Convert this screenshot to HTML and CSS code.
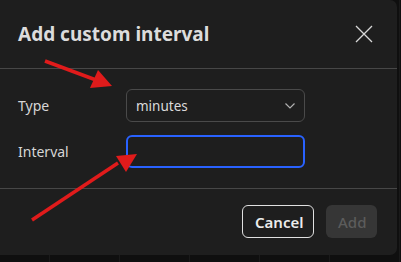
FILE: index.html
```html
<!DOCTYPE html>
<html>
<head>
<meta charset="utf-8">
<link rel="stylesheet" href="styles.css">
</head>
<body>
<div class="dialog">
  <div class="header">
    <div class="title">Add custom interval</div>
    <button class="close" aria-label="Close">
      <svg width="18" height="18" viewBox="0 0 18 18"><path d="M1 1L17 17M17 1L1 17" stroke="#d8d8d8" stroke-width="1.3" fill="none"/></svg>
    </button>
  </div>
  <div class="body">
    <label class="label">Type</label>
    <div class="select">
      <span>minutes</span>
      <svg width="12" height="8" viewBox="0 0 12 8"><path d="M1.5 1.5L6 6L10.5 1.5" stroke="#b0b0b0" stroke-width="1.2" fill="none"/></svg>
    </div>
    <label class="label">Interval</label>
    <div class="input"></div>
  </div>
  <div class="footer">
    <button class="btn cancel">Cancel</button>
    <button class="btn add">Add</button>
  </div>
</div>
<svg class="arrows" width="401" height="262" viewBox="0 0 401 262">
  <line x1="45" y1="61" x2="96" y2="80" stroke="#e01b1b" stroke-width="3.5"/>
  <polygon points="112,86 90,88 98,70" fill="#e01b1b"/>
  <line x1="32" y1="220" x2="118" y2="163" stroke="#e01b1b" stroke-width="3.5"/>
  <polygon points="137,154 116,156 126,172" fill="#e01b1b"/>
</svg>
</body>
</html>
```

FILE: styles.css
```css
html, body {
  margin: 0;
  padding: 0;
}
body {
  width: 401px;
  height: 262px;
  background-color: #0f0f0f;
  background-image: repeating-linear-gradient(90deg, transparent 0, transparent 49px, #1a1a1a 49px, #1a1a1a 50px, transparent 50px, transparent 70px);
  font-family: "Noto Sans", "Open Sans", sans-serif;
  position: relative;
  overflow: hidden;
}
.dialog {
  width: 397px;
  height: 255px;
  background: #1e1e1e;
  border-radius: 0 7px 7px 0;
  display: flex;
  flex-direction: column;
  color: #d9d9d9;
}
.header {
  height: 69px;
  box-sizing: border-box;
  border-bottom: 1px solid #474747;
  display: flex;
  align-items: center;
  justify-content: space-between;
  padding: 0 24px 0 18px;
}
.title {
  font-size: 19px;
  font-weight: 700;
  color: #dcdcdc;
}
.close {
  background: none;
  border: 0;
  padding: 0;
  width: 18px;
  height: 18px;
  display: flex;
}
.body {
  display: grid;
  grid-template-columns: 108px 179px;
  grid-auto-rows: 33px;
  row-gap: 13px;
  align-items: center;
  padding: 20px 18px 20px 18px;
  border-bottom: 1px solid #474747;
}
.label {
  font-size: 14px;
  color: #d6d6d6;
}
.select {
  box-sizing: border-box;
  height: 33px;
  border: 1px solid #4a4a4a;
  border-radius: 6px;
  display: flex;
  align-items: center;
  justify-content: space-between;
  padding: 0 8px 0 9px;
  font-size: 13.5px;
  color: #dadada;
}
.input {
  box-sizing: border-box;
  height: 33px;
  border: 2px solid #2962ff;
  border-radius: 6px;
}
.footer {
  flex: 1;
  display: flex;
  justify-content: flex-end;
  align-items: flex-start;
  gap: 12px;
  padding: 16px 20px 0 0;
}
.btn {
  height: 33px;
  box-sizing: border-box;
  border-radius: 6px;
  font-family: inherit;
  font-size: 15px;
  font-weight: 600;
  padding: 0 12px;
}
.cancel {
  background: transparent;
  border: 1px solid #e0e0e0;
  color: #ececec;
  width: 72px;
}
.add {
  background: #363636;
  border: 0;
  color: #5c5c5c;
  width: 51px;
  font-weight: 500;
}
.arrows {
  position: absolute;
  left: 0;
  top: 0;
  pointer-events: none;
}
```
